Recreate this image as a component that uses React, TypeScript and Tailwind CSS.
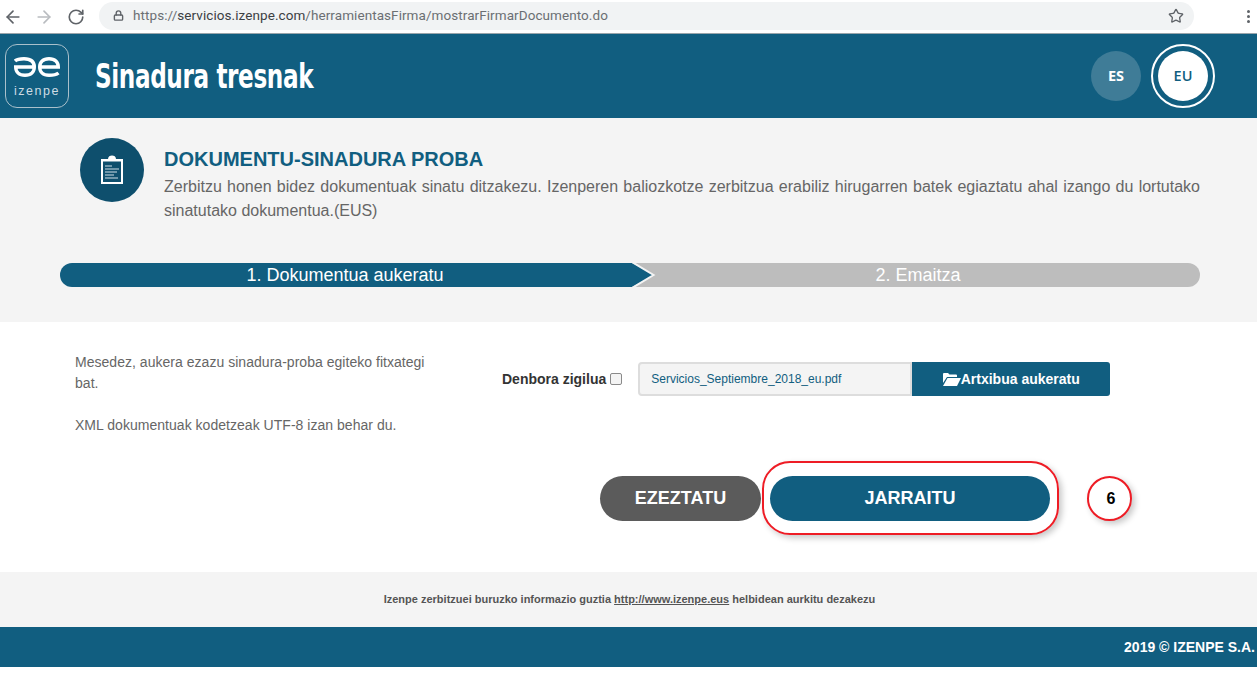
import React from 'react'
import { ArrowLeft, ArrowRight, RotateCw, Star, Lock } from 'lucide-react'

const sans = "font-['Liberation_Sans',Arial,sans-serif]"

function BrowserBar() {
    return (
        <div className="h-[34px] bg-white border-b border-[#9aa5ab] flex items-center pl-[3px] pr-[7px] font-['Roboto',sans-serif]">
            <ArrowLeft size={20} strokeWidth={2} className="text-[#5f6368]" />
            <ArrowRight size={20} strokeWidth={2} className="text-[#b9bcc0] ml-[11px]" />
            <RotateCw size={18} strokeWidth={2.2} className="text-[#5f6368] ml-[13px]" />
            <div className="ml-[14px] flex-1 h-[28px] mb-[2px] rounded-full bg-[#f1f3f4] flex items-center pl-[14px] pr-[10px]">
                <Lock size={11} strokeWidth={3} className="text-[#5f6368]" />
                <span className="ml-[9px] text-[13.5px] tracking-[0.07px] text-[#6b6f73]">
                    https://<span className="text-[#3c4043]">servicios.izenpe.com</span>/herramientasFirma/mostrarFirmarDocumento.do
                </span>
                <Star size={16} strokeWidth={2} className="ml-auto text-[#5f6368]" />
            </div>
            <div className="ml-[53px] w-[3px] flex flex-col gap-[2px]">
                <span className="w-[3px] h-[3px] rounded-full bg-[#5f6368]" />
                <span className="w-[3px] h-[3px] rounded-full bg-[#5f6368]" />
                <span className="w-[3px] h-[3px] rounded-full bg-[#5f6368]" />
            </div>
        </div>
    )
}

function Logo() {
    return (
        <div className="w-[64px] h-[64px] rounded-[12px] border border-[#a9c0cb] flex flex-col items-center pt-[12px]">
            <svg width="46" height="20" viewBox="0 0 46 20" fill="none" stroke="white" strokeWidth="3.4">
                <path d="M1 4 C3 2 6 1.7 10 1.7 C17 1.7 20.3 5 20.3 10 C20.3 15 17 18.3 11 18.3 C5 18.3 1.7 15 1.7 10 H20.3" />
                <path d="M25.7 10 H44.3 C44.3 5 41 1.7 35 1.7 C29 1.7 25.7 5 25.7 10 C25.7 15 29 18.3 35 18.3 C39 18.3 42 18 44.5 16" />
            </svg>
            <span className={`${sans} text-[12.5px] leading-none mt-[8px] tracking-[1.5px] text-[#cfdde4]`}>izenpe</span>
        </div>
    )
}

function Header() {
    return (
        <header className="h-[84px] bg-[#115e80] flex items-center pl-[5px] pr-[42px]">
            <Logo />
            <h1 className="ml-[26px] whitespace-nowrap origin-left scale-x-[0.682] text-white text-[34px] font-bold font-['DejaVu_Sans',sans-serif] tracking-[-0.6px]">
                Sinadura tresnak
            </h1>
            <div className="ml-auto flex items-center gap-[10px]">
                <div className="w-[50px] h-[50px] rounded-full bg-[#3f7c97] text-white text-[14.5px] font-bold font-['Open_Sans',sans-serif] flex items-center justify-center">
                    ES
                </div>
                <div className="w-[64px] h-[64px] rounded-full border-[2px] border-white flex items-center justify-center">
                    <div className="w-[50px] h-[50px] rounded-full bg-white text-[#115e80] text-[14.5px] font-semibold font-['Open_Sans',sans-serif] flex items-center justify-center">
                        EU
                    </div>
                </div>
            </div>
        </header>
    )
}

function ClipboardIcon() {
    return (
        <svg width="24" height="30" viewBox="0 0 24 30">
            <path fill="white" d="M1 4 H8 C8 1.5 10 0.5 12 0.5 C14 0.5 16 1.5 16 4 H23 V29 H1 Z" />
            <rect x="3" y="6.5" width="18" height="20.5" fill="#0e4f6d" />
            <path stroke="#cfe0e8" strokeWidth="1.2" d="M5 11 H12 M5 14 H19 M5 17 H17 M5 20 H14 M5 23 H18" />
        </svg>
    )
}

function Intro() {
    return (
        <section className={`h-[204px] bg-[#f4f4f4] pl-[60px] pr-[57px] ${sans}`}>
            <div className="flex pt-[20px] pl-[20px] h-[145px]">
                <div className="w-[64px] h-[64px] rounded-full bg-[#0e4f6d] flex items-center justify-center shrink-0">
                    <ClipboardIcon />
                </div>
                <div className="ml-[20px] flex-1">
                    <h2 className="text-[#115e80] text-[20px] leading-[24px] mt-[9px] font-bold">DOKUMENTU-SINADURA PROBA</h2>
                    <p className="mt-[4px] text-[#666] text-[16px] leading-[24px] text-justify">
                        Zerbitzu honen bidez dokumentuak sinatu ditzakezu. Izenperen baliozkotze zerbitzua erabiliz hirugarren batek egiaztatu ahal izango du lortutako sinatutako dokumentua.(EUS)
                    </p>
                </div>
            </div>
            <div className="relative flex h-[24px] rounded-full overflow-hidden text-[18px] leading-[24px] text-white text-center">
                <div className="w-[570px] bg-[#115e80]">1. Dokumentua aukeratu</div>
                <div className="flex-1 bg-[#bdbdbd] pl-[6px]">2. Emaitza</div>
                {/* chevron between the steps */}
                <svg className="absolute left-[570px] top-0" width="26" height="24" viewBox="0 0 26 24">
                    <path d="M0 0 H2 L24 12 L2 24 H0 Z" fill="#115e80" />
                    <path d="M2 -1 L23.5 12 L2 25" fill="none" stroke="#f4f4f4" strokeWidth="2" />
                </svg>
            </div>
        </section>
    )
}

function FolderIcon() {
    return (
        <svg width="18" height="14" viewBox="0 0 18 14" fill="white">
            <path d="M0 2 Q0 1 1 1 H5 L6.5 2.5 H13 Q14 2.5 14 3.5 V5 H4 L0 11 Z" />
            <path d="M4.5 6 H18 L14 14 H0 Z" />
        </svg>
    )
}

function FormArea() {
    return (
        <section className={`h-[250px] bg-white ${sans}`}>
            <div className="flex pt-[30px]">
                <div className="w-[370px] ml-[75px] text-[14px] tracking-[0.03px] leading-[21px] text-[#666]">
                    <p>Mesedez, aukera ezazu sinadura-proba egiteko fitxategi bat.</p>
                    <p className="mt-[21px]">XML dokumentuak kodetzeak UTF-8 izan behar du.</p>
                </div>
                <div className="ml-[57px] mt-[10px] h-[34px] flex items-center">
                    <span className="text-[14px] font-bold text-[#333]">Denbora zigilua</span>
                    <span className="ml-[4px] w-[12px] h-[12px] rounded-[2px] border border-[#8a8a8a] bg-[#f4f4f4]" />
                    <div className="ml-[16px] w-[274px] h-[34px] bg-[#f4f4f4] border-2 border-[#dddddd] rounded-l-[4px] flex items-center pl-[11px] text-[12px] text-[#115e80]">
                        Servicios_Septiembre_2018_eu.pdf
                    </div>
                    <div className="w-[198px] h-[34px] bg-[#115e80] rounded-r-[3px] text-white text-[14px] font-bold flex items-center justify-center">
                        <FolderIcon />
                        <span>Artxibua aukeratu</span>
                    </div>
                </div>
            </div>
            <div className="flex items-center mt-[40px] ml-[600px]">
                <div className="w-[161px] h-[45px] rounded-[23px] bg-[#5b5b5b] text-white text-[18px] font-bold flex items-center justify-center">EZEZTATU</div>
                <div className="relative ml-[9px] w-[280px] h-[45px] rounded-[23px] bg-[#115e80] text-white text-[18px] font-bold flex items-center justify-center">
                    JARRAITU
                    {/* red annotation drawn over the button */}
                    <span className="absolute left-[-8px] top-[-15px] w-[297px] h-[74px] rounded-[28px] border-2 border-[#ee1c25] shadow-[3px_3px_6px_rgba(0,0,0,0.22)]" />
                </div>
                <div className="ml-[37px] w-[45px] h-[45px] pl-[3px] rounded-full bg-white border-2 border-[#ee1c25] shadow-[3px_3px_6px_rgba(0,0,0,0.22)] text-black text-[16px] font-bold flex items-center justify-center">6</div>
            </div>
        </section>
    )
}

function Footer() {
    return (
        <footer className={sans}>
            <div className="h-[55px] bg-[#f4f4f4] pl-[2px] flex items-center justify-center text-[11px] font-bold text-[#555]">
                <span>Izenpe zerbitzuei buruzko informazio guztia <span className="underline">http://www.izenpe.eus</span> helbidean aurkitu dezakezu</span>
            </div>
            <div className="h-[40px] bg-[#115e80] flex items-center justify-end pr-[2px] text-white text-[14px] font-bold">
                2019 © IZENPE S.A.
            </div>
        </footer>
    )
}

export default function App() {
    return (
        <div className="w-[1257px] h-[675px] bg-white overflow-hidden">
            <BrowserBar />
            <Header />
            <Intro />
            <FormArea />
            <Footer />
        </div>
    )
}
